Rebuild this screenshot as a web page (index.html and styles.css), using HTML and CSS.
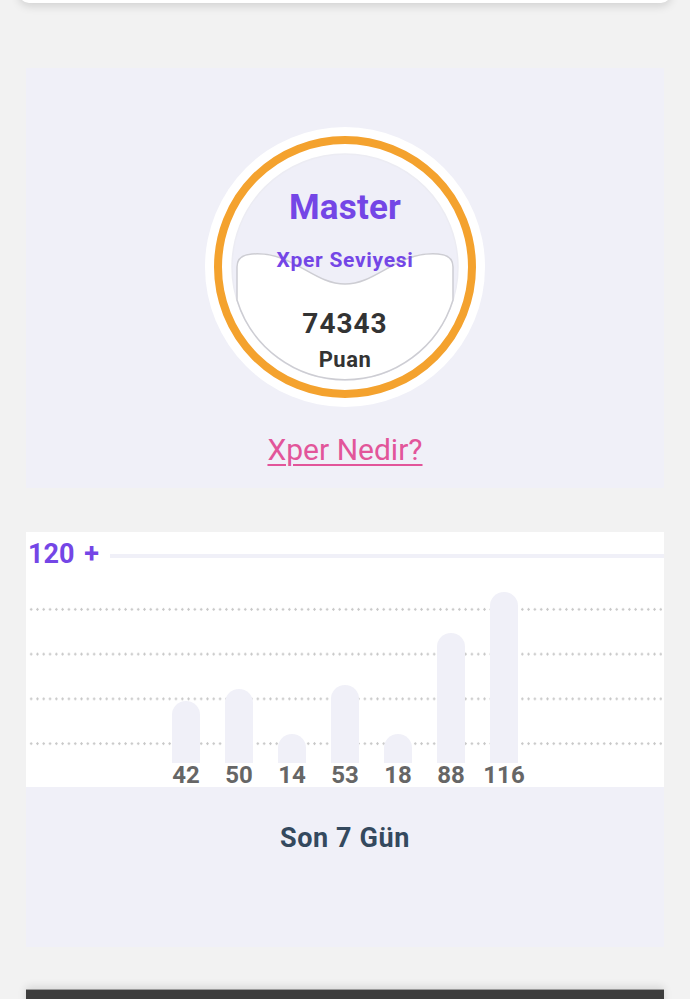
FILE: index.html
```html
<!DOCTYPE html>
<html lang="tr">
<head>
    <meta charset="UTF-8">
    <meta name="viewport" content="width=device-width, initial-scale=1.0">
    <title>Xper Seviyesi</title>
    <link rel="stylesheet" href="styles.css">
</head>
<body>
    <div class="top-card"></div>
    <main class="page">
        <section class="xper-card">
            <div class="medal">
                <svg class="medal-bg" viewBox="0 0 280 280" width="280" height="280">
                    <circle cx="140" cy="140" r="140" fill="#fff"/>
                    <circle cx="140" cy="140" r="127" fill="none" stroke="#f4a22e" stroke-width="8"/>
                    <circle cx="140" cy="140" r="113" fill="#efeff8" stroke="#ececf3" stroke-width="1.5"/>
                    <path d="M32 140 Q32 128 47 127 C88 124 108 157 140 157 C172 157 192 124 233 127 Q248 128 248 140 L248 173 A113 113 0 0 1 32 173 Z" fill="#fff" stroke="#cdcdd3" stroke-width="1.5"/>
                </svg>
                <div class="medal-text">
                    <div class="level">Master</div>
                    <div class="level-label">Xper Seviyesi</div>
                    <div class="points">74343</div>
                    <div class="points-label">Puan</div>
                </div>
            </div>
            <a class="xper-link" href="#">Xper Nedir?</a>
        </section>

        <section class="stats-card">
            <div class="chart">
                <div class="chart-head">
                    <span class="chart-max">120 +</span>
                    <span class="chart-rule"></span>
                </div>
                <div class="plot">
                    <div class="bar" style="height: 62px"></div>
                    <div class="bar" style="height: 74px"></div>
                    <div class="bar" style="height: 29px"></div>
                    <div class="bar" style="height: 78px"></div>
                    <div class="bar" style="height: 29px"></div>
                    <div class="bar" style="height: 130px"></div>
                    <div class="bar" style="height: 171px"></div>
                </div>
                <div class="labels">
                    <span class="label">42</span>
                    <span class="label">50</span>
                    <span class="label">14</span>
                    <span class="label">53</span>
                    <span class="label">18</span>
                    <span class="label">88</span>
                    <span class="label">116</span>
                </div>
            </div>
            <div class="stats-title">Son 7 Gün</div>
        </section>

        <div class="bottom-bar"></div>
    </main>
</body>
</html>
```

FILE: styles.css
```css
body {
    margin: 0;
    background-color: #f2f2f2;
    font-family: Roboto, "Noto Sans", sans-serif;
    overflow: hidden;
}
.top-card {
    height: 60px;
    margin: -57px 19px 0;
    background-color: #fff;
    border-radius: 10px;
    box-shadow: 0 3px 10px rgba(0, 0, 0, 0.14);
}
.page {
    margin: 0 26px;
}
.xper-card {
    margin-top: 65px;
    padding: 59px 0 24px;
    background-color: #f0f0f8;
    display: flex;
    flex-direction: column;
    align-items: center;
}
.medal {
    position: relative;
    width: 280px;
    height: 280px;
}
.medal-bg {
    position: absolute;
    top: 0;
    left: 0;
}
.medal-text {
    position: relative;
    display: flex;
    flex-direction: column;
    align-items: center;
    padding-top: 61px;
    font-weight: 700;
}
.level {
    font-size: 35px;
    line-height: 40px;
    letter-spacing: 0.2px;
    color: #7446e6;
}
.level-label {
    margin-top: 20px;
    font-size: 21px;
    line-height: 24px;
    letter-spacing: 0.7px;
    color: #7446e6;
}
.points {
    margin-top: 36px;
    font-size: 28px;
    line-height: 32px;
    letter-spacing: 1px;
    color: #333;
}
.points-label {
    margin-top: 8px;
    font-size: 22px;
    line-height: 24px;
    letter-spacing: 0.5px;
    color: #333;
}
.xper-link {
    margin-top: 29px;
    font-size: 30px;
    line-height: 28px;
    color: #e2559a;
    text-decoration-thickness: 2px;
    text-underline-offset: 4px;
}
.stats-card {
    margin-top: 44px;
    background-color: #f0f0f8;
}
.chart {
    background-color: #fff;
    padding-top: 7px;
}
.chart-head {
    display: flex;
    align-items: center;
    padding-left: 2px;
}
.chart-max {
    font-size: 27px;
    line-height: 30px;
    font-weight: 700;
    color: #7446e6;
    word-spacing: 3px;
}
.chart-rule {
    flex: 1;
    height: 4px;
    margin: 3px 0 0 11px;
    background-color: #f0f0f8;
}
.plot {
    height: 176px;
    margin: 18px 2px 0;
    display: flex;
    justify-content: center;
    align-items: flex-end;
    gap: 25px;
    background-image: radial-gradient(circle, #c8c8c8 1px, transparent 1.4px);
    background-size: 6.3px 44.75px;
}
.bar {
    width: 28px;
    background-color: #f0f0f8;
    border-radius: 14px 14px 0 0;
}
.labels {
    display: flex;
    justify-content: center;
    gap: 25px;
    height: 24px;
}
.label {
    width: 28px;
    display: flex;
    justify-content: center;
    white-space: nowrap;
    font-size: 24px;
    line-height: 24px;
    font-weight: 700;
    color: #666;
}
.stats-title {
    box-sizing: border-box;
    height: 160px;
    padding-top: 36px;
    text-align: center;
    font-size: 27px;
    line-height: 30px;
    letter-spacing: 0.6px;
    font-weight: 700;
    color: #34495e;
}
.bottom-bar {
    margin-top: 42px;
    height: 20px;
    background-color: #3d3d3d;
    border-top: 1px solid #9a9a9a;
    box-shadow: 0 -2px 8px rgba(0, 0, 0, 0.12);
}
```
